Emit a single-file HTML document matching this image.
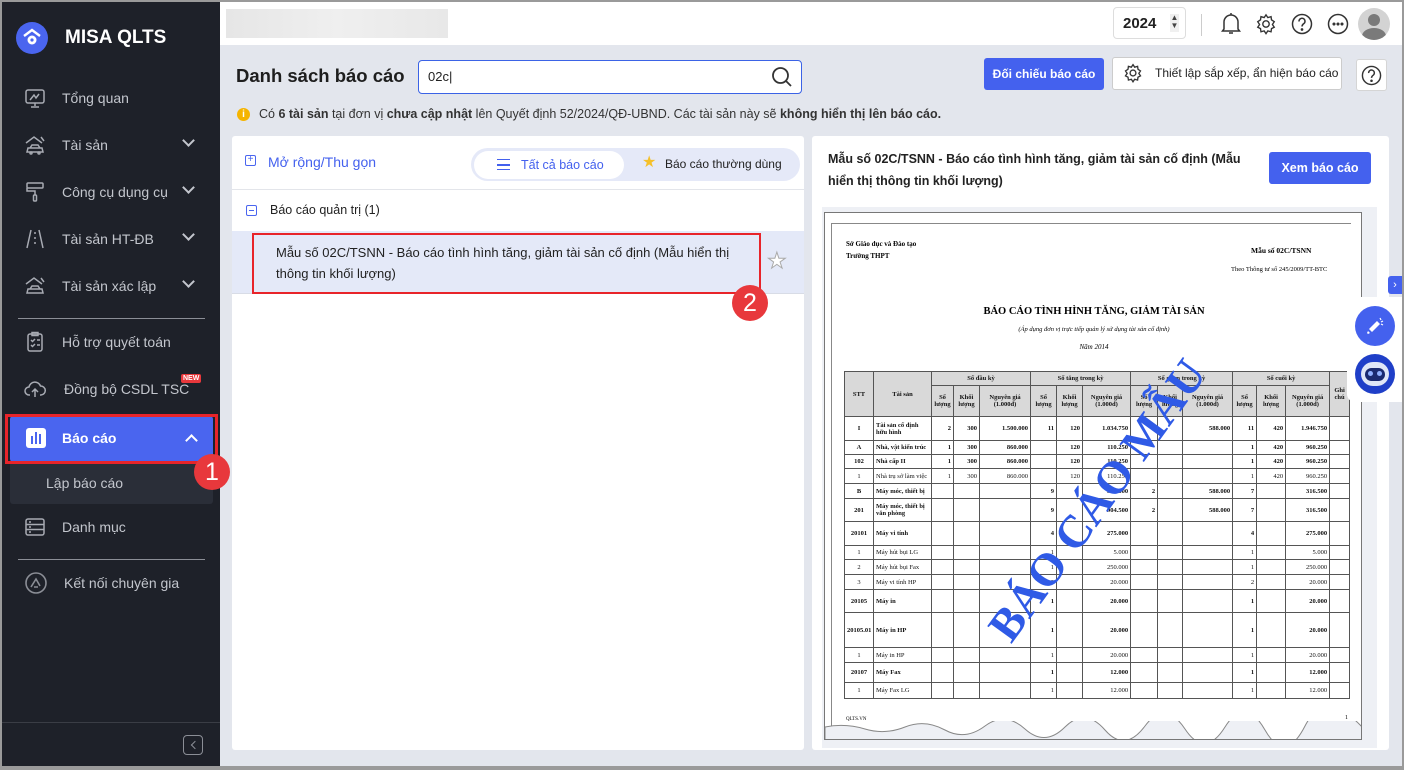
<!DOCTYPE html>
<html><head><meta charset="utf-8"><style>
*{box-sizing:border-box;margin:0;padding:0}
body{width:1404px;height:770px;overflow:hidden;font-family:"Liberation Sans",sans-serif;background:#9a9a9a;position:relative}
.frame{position:absolute;left:2px;top:2px;width:1400px;height:764px;background:#e3e6ed;overflow:hidden}
.side{position:absolute;left:0;top:0;width:218px;height:764px;background:#1e2129;color:#c9ccd3}
.a{position:absolute}
.mi{position:absolute;left:0;width:218px;height:46px;display:flex;align-items:center;font-size:14px;color:#c3c6cd}
.mi svg{position:absolute;left:22px}
.mi span{position:absolute;left:60px}
.mi .chev{position:absolute;left:182px;width:9px;height:9px;border-right:2px solid #c3c6cd;border-bottom:2px solid #c3c6cd;transform:rotate(45deg);top:14px}
.hr{position:absolute;left:16px;width:187px;height:1px;background:#8b8e96}
.top{position:absolute;left:218px;top:0;right:0;height:43px;background:#fff}
.badge{position:absolute;width:36px;height:36px;border-radius:50%;background:#e8383c;color:#fff;font-size:25px;text-align:center;line-height:36px}
.pv td{border:1px solid #555;font-family:"Liberation Serif",serif;font-size:6.5px;color:#111;text-align:right;padding:0 2px;line-height:7px;overflow:hidden;white-space:nowrap}
.pv td.l{text-align:left}.pv td.c{text-align:center}.pv tr.b td{font-weight:bold}
.pv table{border-collapse:collapse;table-layout:fixed;width:505px}
</style></head><body><div class="frame">
<div class="side">
 <div class="a" style="left:14px;top:20px;width:32px;height:32px;border-radius:50%;background:#4a65ef"></div>
 <svg class="a" style="left:19px;top:24px" width="22" height="22" viewBox="0 0 22 22"><path d="M3 10L11 4L19 10" stroke="#fff" stroke-width="2.4" fill="none"/><circle cx="11" cy="14" r="4.5" fill="#fff"/><circle cx="11" cy="14" r="1.6" fill="#4a65ef"/></svg>
 <div class="a" style="left:63px;top:25px;font-size:19px;font-weight:bold;color:#fff">MISA QLTS</div>
 <div class="mi" style="top:73px"><svg width="22" height="22" viewBox="0 0 22 22" fill="none" stroke="#a8abb3" stroke-width="1.5"><rect x="2" y="3" width="18" height="13" rx="2"/><path d="M6 13l4-5 2 3 3-4M11 16v3M7 20h8"/></svg><span>Tổng quan</span></div>
 <div class="mi" style="top:120px"><svg width="22" height="22" viewBox="0 0 22 22" fill="none" stroke="#a8abb3" stroke-width="1.5"><path d="M2 9l8-6 8 6M17 3l3 4M4 14h14l1 4H3zM6 14l2-3h6l2 3"/><circle cx="7" cy="19" r="1"/><circle cx="15" cy="19" r="1"/></svg><span>Tài sản</span><i class="chev"></i></div>
 <div class="mi" style="top:167px"><svg width="22" height="22" viewBox="0 0 22 22" fill="none" stroke="#a8abb3" stroke-width="1.5"><rect x="3" y="2" width="16" height="5" rx="1"/><path d="M3 7v3h8v4"/><rect x="9.5" y="14" width="3" height="6" rx="1"/></svg><span>Công cụ dụng cụ</span><i class="chev"></i></div>
 <div class="mi" style="top:214px"><svg width="22" height="22" viewBox="0 0 22 22" fill="none" stroke="#a8abb3" stroke-width="1.5"><path d="M7 2L3 20M15 2l4 18M11 4v2M11 9v2M11 14v2"/></svg><span>Tài sản HT-ĐB</span><i class="chev"></i></div>
 <div class="mi" style="top:261px"><svg width="22" height="22" viewBox="0 0 22 22" fill="none" stroke="#a8abb3" stroke-width="1.5"><path d="M2 9l8-6 8 6M17 3l3 4M4 14h14l1 4H3zM6 14l2-3h6l2 3"/></svg><span>Tài sản xác lập</span><i class="chev"></i></div>
 <div class="hr" style="top:316px"></div>
 <div class="mi" style="top:317px"><svg width="22" height="22" viewBox="0 0 22 22" fill="none" stroke="#a8abb3" stroke-width="1.5"><rect x="4" y="3" width="14" height="17" rx="2"/><rect x="8" y="1.5" width="6" height="3"/><path d="M7 9l1.5 1.5L11 8M7 14l1.5 1.5L11 13M13 9h3M13 14h3"/></svg><span>Hỗ trợ quyết toán</span></div>
 <div class="mi" style="top:364px"><svg width="22" height="22" viewBox="0 0 22 22" fill="none" stroke="#a8abb3" stroke-width="1.5"><path d="M6 17H5a4 4 0 010-8 6 6 0 0111.5-1A4.5 4.5 0 0117 17h-1M11 19v-8M8 14l3-3 3 3"/></svg><span style="left:62px">Đồng bộ CSDL TSC</span><b class="a" style="left:179px;top:8px;background:#e8383c;color:#fff;font-size:7px;padding:1px 2px;border-radius:2px">NEW</b></div>
 <div class="a" style="left:8px;top:414px;width:203px;height:46px;background:#4a65ef;border-radius:3px"></div>
 <div class="a" style="left:3px;top:412px;width:213px;height:50px;border:3px solid #e8242a"></div>
 <div class="a" style="left:24px;top:426px;width:20px;height:20px;background:#fff;border-radius:3px"></div>
 <div class="a" style="left:29px;top:434px;width:2px;height:8px;background:#4a65ef"></div><div class="a" style="left:33px;top:430px;width:2px;height:12px;background:#4a65ef"></div><div class="a" style="left:37px;top:432px;width:2px;height:10px;background:#4a65ef"></div>
 <div class="a" style="left:60px;top:428px;font-size:14px;font-weight:bold;color:#fff">Báo cáo</div>
 <div class="a" style="left:185px;top:434px;width:9px;height:9px;border-left:2px solid #fff;border-top:2px solid #fff;transform:rotate(45deg)"></div>
 <div class="a" style="left:8px;top:462px;width:203px;height:40px;background:#2a2e38;border-radius:0 0 3px 3px"></div>
 <div class="a" style="left:44px;top:473px;font-size:14px;color:#c3c6cd">Lập báo cáo</div>
 <div class="mi" style="top:502px"><svg width="22" height="22" viewBox="0 0 22 22" fill="none" stroke="#a8abb3" stroke-width="1.5"><rect x="2" y="3" width="18" height="16" rx="2"/><path d="M2 8.5h18M2 13.5h18M5 6h2M5 11h2M5 16h2"/></svg><span>Danh mục</span></div>
 <div class="hr" style="top:557px"></div>
 <div class="mi" style="top:558px"><svg width="24" height="24" viewBox="0 0 24 24" fill="none" stroke="#8b8e96" stroke-width="1.6"><circle cx="12" cy="12" r="10"/><path d="M7 16l5-8 4 7M10 16h4"/></svg><span style="left:62px">Kết nối chuyên gia</span></div>
 <div class="a" style="left:0;top:720px;width:218px;height:1px;background:#3a3d45"></div>
 <div class="a" style="left:181px;top:733px;width:20px;height:20px;border:1.5px solid #8b8e96;border-radius:4px"></div>
 <div class="a" style="left:190px;top:740px;width:6px;height:6px;border-left:1.5px solid #8b8e96;border-bottom:1.5px solid #8b8e96;transform:rotate(45deg)"></div>
</div>
<div class="badge" style="left:192px;top:452px">1</div>
<div class="top">
 <div class="a" style="left:6px;top:7px;width:222px;height:29px;background:linear-gradient(90deg,#e6e6e6,#efefef,#e8e8e8)"></div>
 <div class="a" style="left:893px;top:5px;width:73px;height:32px;border:1px solid #ddd;border-radius:4px;font-size:15px;font-weight:bold;color:#222;padding:7px 0 0 9px">2024</div>
 <div class="a" style="left:950px;top:12px;width:9px;height:18px;background:#f0f0f0;font-size:8px;color:#444;text-align:center;line-height:8px">▲<br>▼</div>
 <div class="a" style="left:981px;top:12px;width:1px;height:22px;background:#ccc"></div>
 <svg class="a" style="left:1000px;top:10px" width="22" height="24" viewBox="0 0 22 24" fill="none" stroke="#333" stroke-width="1.5"><path d="M4 17V10a7 7 0 0114 0v7l1.5 2h-17zM9 21h4M11 1v2"/></svg>
 <svg class="a" style="left:1035px;top:11px" width="22" height="22" viewBox="0 0 24 24" fill="none" stroke="#333" stroke-width="1.5"><circle cx="12" cy="12" r="3.5"/><path d="M12 2l2 3 3.5-1 .5 3.5 3 2-2 3 2 3-3 1.5-.5 3.5-3.5-1-2 3-2-3-3.5 1-.5-3.5-3-1.5 2-3-2-3 3-2 .5-3.5 3.5 1z"/></svg>
 <svg class="a" style="left:1071px;top:11px" width="22" height="22" viewBox="0 0 22 22" fill="none" stroke="#333" stroke-width="1.5"><circle cx="11" cy="11" r="9.5"/><path d="M8 8.5a3 3 0 115 2c-1.2.8-2 1.3-2 3"/><circle cx="11" cy="16.5" r=".6" fill="#333"/></svg>
 <svg class="a" style="left:1107px;top:11px" width="22" height="22" viewBox="0 0 22 22" fill="none" stroke="#333" stroke-width="1.5"><circle cx="11" cy="11" r="9.5"/><circle cx="7" cy="11" r=".8" fill="#333"/><circle cx="11" cy="11" r=".8" fill="#333"/><circle cx="15" cy="11" r=".8" fill="#333"/></svg>
 <div class="a" style="left:1138px;top:6px;width:32px;height:32px;border-radius:50%;background:#d3d3d3;overflow:hidden"><div class="a" style="left:10px;top:6px;width:12px;height:12px;border-radius:50%;background:#7a7a7a"></div><div class="a" style="left:4px;top:20px;width:24px;height:16px;border-radius:50%;background:#7a7a7a"></div></div>
</div>
<div class="a" style="left:234px;top:63px;font-size:18.5px;font-weight:bold;color:#1e1e1e">Danh sách báo cáo</div>
<div class="a" style="left:416px;top:58px;width:384px;height:34px;border:1.5px solid #3b63e6;border-radius:4px;background:#fff;font-size:13px;color:#222;padding:8px 0 0 9px">02c|</div>
<svg class="a" style="left:769px;top:64px" width="22" height="22" viewBox="0 0 22 22" fill="none" stroke="#333" stroke-width="1.8"><circle cx="9.5" cy="9.5" r="7.5"/><path d="M15 15l5 5"/></svg>
<div class="a" style="left:982px;top:56px;width:120px;height:32px;background:#4461ee;border-radius:3px;color:#fff;font-size:12px;font-weight:bold;text-align:center;line-height:32px;white-space:nowrap">Đối chiếu báo cáo</div>
<div class="a" style="left:1110px;top:55px;width:230px;height:33px;background:#fff;border:1px solid #ccc;border-radius:3px;font-size:12px;color:#222;line-height:31px;padding-left:42px;white-space:nowrap;overflow:hidden">Thiết lập sắp xếp, ẩn hiện báo cáo</div>
<svg class="a" style="left:1121px;top:61px" width="20" height="20" viewBox="0 0 24 24" fill="none" stroke="#333" stroke-width="1.6"><circle cx="12" cy="12" r="3.5"/><path d="M12 2l2 3 3.5-1 .5 3.5 3 2-2 3 2 3-3 1.5-.5 3.5-3.5-1-2 3-2-3-3.5 1-.5-3.5-3-1.5 2-3-2-3 3-2 .5-3.5 3.5 1z"/></svg>
<div class="a" style="left:1354px;top:57px;width:31px;height:32px;background:#fff;border:1px solid #d5d5d5;border-radius:3px"></div>
<svg class="a" style="left:1359px;top:63px" width="21" height="21" viewBox="0 0 22 22" fill="none" stroke="#333" stroke-width="1.5"><circle cx="11" cy="11" r="9.5"/><path d="M8 8.5a3 3 0 115 2c-1.2.8-2 1.3-2 3"/><circle cx="11" cy="16.5" r=".6" fill="#333"/></svg>
<div class="a" style="left:235px;top:106px;width:13px;height:13px;border-radius:50%;background:#f5b400;color:#fff;font-size:10px;text-align:center;line-height:13px;font-weight:bold">i</div>
<div class="a" style="left:257px;top:105px;font-size:12.5px;color:#333;white-space:nowrap">Có <b>6 tài sản</b> tại đơn vị <b>chưa cập nhật</b> lên Quyết định 52/2024/QĐ-UBND. Các tài sản này sẽ <b>không hiển thị lên báo cáo.</b></div>
<!-- left panel -->
<div class="a" style="left:230px;top:134px;width:572px;height:614px;background:#fff;border-radius:3px"></div>
<div class="a" style="left:243px;top:153px;width:11px;height:11px;border:1px solid #4a65ef;border-radius:2px;color:#4a65ef;font-size:10px;line-height:8px;text-align:center">+</div>
<div class="a" style="left:266px;top:152px;font-size:14px;color:#4461ee">Mở rộng/Thu gọn</div>
<div class="a" style="left:469px;top:146px;width:329px;height:33px;background:#e5e9f8;border-radius:17px"></div>
<div class="a" style="left:472px;top:149px;width:150px;height:28px;background:#fff;border-radius:14px;font-size:12.5px;color:#4461ee;line-height:28px;padding-left:47px">Tất cả báo cáo</div>
<div class="a" style="left:495px;top:157px;width:13px;height:11px;border-top:1.5px solid #4461ee;border-bottom:1.5px solid #4461ee"></div><div class="a" style="left:495px;top:162px;width:13px;height:1.5px;background:#4461ee"></div>
<div class="a" style="left:640px;top:150px;font-size:16px;color:#f5c02a">★</div>
<div class="a" style="left:663px;top:155px;font-size:12px;color:#222;white-space:nowrap">Báo cáo thường dùng</div>
<div class="a" style="left:230px;top:187px;width:572px;height:1px;background:#e3e5ea"></div>
<div class="a" style="left:244px;top:203px;width:11px;height:11px;border:1px solid #4a65ef;border-radius:2px"></div><div class="a" style="left:247px;top:208px;width:5px;height:1px;background:#4a65ef"></div>
<div class="a" style="left:268px;top:201px;font-size:12.5px;color:#222">Báo cáo quản trị (1)</div>
<div class="a" style="left:230px;top:229px;width:572px;height:63px;background:#e4e9f8;border-bottom:1px solid #d8dce6"></div>
<div class="a" style="left:250px;top:231px;width:509px;height:61px;border:2.5px solid #e8242a"></div>
<div class="a" style="left:274px;top:240px;width:470px;font-size:13px;color:#222;line-height:21px">Mẫu số 02C/TSNN - Báo cáo tình hình tăng, giảm tài sản cố định (Mẫu hiển thị thông tin khối lượng)</div>
<div class="a" style="left:765px;top:246px;font-size:22px;color:#fff;-webkit-text-stroke:1px #aaa">★</div>
<div class="badge" style="left:730px;top:283px">2</div>
<!-- right panel -->
<div class="a" style="left:810px;top:134px;width:577px;height:614px;background:#fff;border-radius:3px"></div>
<div class="a" style="left:826px;top:146px;width:440px;font-size:12.5px;font-weight:bold;color:#222;line-height:22px">Mẫu số 02C/TSNN - Báo cáo tình hình tăng, giảm tài sản cố định (Mẫu hiển thị thông tin khối lượng)</div>
<div class="a" style="left:1267px;top:150px;width:102px;height:32px;background:#4461ee;border-radius:3px;color:#fff;font-size:12.5px;font-weight:bold;text-align:center;line-height:32px">Xem báo cáo</div>
<div class="a" style="left:820px;top:205px;width:555px;height:541px;background:#eef0f5"></div>
<div class="a pv" style="left:822px;top:210px;width:538px;height:528px;background:#fff;border:1px solid #777;overflow:hidden">
 <div class="a" style="left:6px;top:10px;width:520px;height:512px;border-left:1px solid #888;border-top:1px solid #888"></div>
 <div class="a" style="left:21px;top:27px;font:bold 7px 'Liberation Serif',serif">Sở Giáo dục và Đào tạo<br><span style="line-height:16px">Trường THPT</span></div>
 <div class="a" style="left:426px;top:33px;font:bold 7.5px 'Liberation Serif',serif">Mẫu số 02C/TSNN</div>
 <div class="a" style="left:406px;top:53px;font:6.5px 'Liberation Serif',serif">Theo Thông tư số 245/2009/TT-BTC</div>
 <div class="a" style="left:0;width:538px;top:93px;text-align:center;font:bold 10.5px 'Liberation Serif',serif">BÁO CÁO TÌNH HÌNH TĂNG, GIẢM TÀI SẢN</div>
 <div class="a" style="left:0;width:538px;top:113px;text-align:center;font:italic 6.5px 'Liberation Serif',serif">(Áp dụng đơn vị trực tiếp quản lý sử dụng tài sản cố định)</div>
 <div class="a" style="left:0;width:538px;top:130px;text-align:center;font:italic 7px 'Liberation Serif',serif">Năm 2014</div>
 <table class="a" style="left:19px;top:158px">
 <colgroup><col style="width:29px"><col style="width:58px"><col style="width:22px"><col style="width:26px"><col style="width:51px"><col style="width:26px"><col style="width:26px"><col style="width:48px"><col style="width:27px"><col style="width:25px"><col style="width:50px"><col style="width:24px"><col style="width:29px"><col style="width:44px"><col style="width:20px"></colgroup>
 <tr class="b" style="height:14px;background:#d9d9d9"><td rowspan="2" class="c">STT</td><td rowspan="2" class="c">Tài sản</td><td colspan="3" class="c">Số đầu kỳ</td><td colspan="3" class="c">Số tăng trong kỳ</td><td colspan="3" class="c">Số giảm trong kỳ</td><td colspan="3" class="c">Số cuối kỳ</td><td rowspan="2" class="c">Ghi<br>chú</td></tr>
 <tr class="b" style="height:31px;background:#d9d9d9"><td class="c">Số<br>lượng</td><td class="c">Khối<br>lượng</td><td class="c">Nguyên giá<br>(1.000đ)</td><td class="c">Số<br>lượng</td><td class="c">Khối<br>lượng</td><td class="c">Nguyên giá<br>(1.000đ)</td><td class="c">Số<br>lượng</td><td class="c">Khối<br>lượng</td><td class="c">Nguyên giá<br>(1.000đ)</td><td class="c">Số<br>lượng</td><td class="c">Khối<br>lượng</td><td class="c">Nguyên giá<br>(1.000đ)</td></tr>
 <tr class="b" style="height:24px"><td class="c">I</td><td class="l">Tài sản cố định<br>hữu hình</td><td>2</td><td>300</td><td>1.500.000</td><td>11</td><td>120</td><td>1.034.750</td><td>2</td><td></td><td>588.000</td><td>11</td><td>420</td><td>1.946.750</td><td></td></tr>
 <tr class="b" style="height:14px"><td class="c">A</td><td class="l">Nhà, vật kiến trúc</td><td>1</td><td>300</td><td>860.000</td><td></td><td>120</td><td>110.250</td><td></td><td></td><td></td><td>1</td><td>420</td><td>960.250</td><td></td></tr>
 <tr class="b" style="height:14px"><td class="c">102</td><td class="l">Nhà cấp II</td><td>1</td><td>300</td><td>860.000</td><td></td><td>120</td><td>110.250</td><td></td><td></td><td></td><td>1</td><td>420</td><td>960.250</td><td></td></tr>
 <tr style="height:15px"><td class="c">1</td><td class="l">Nhà trụ sở làm việc</td><td>1</td><td>300</td><td>860.000</td><td></td><td>120</td><td>110.250</td><td></td><td></td><td></td><td>1</td><td>420</td><td>960.250</td><td></td></tr>
 <tr class="b" style="height:15px"><td class="c">B</td><td class="l">Máy móc, thiết bị</td><td></td><td></td><td></td><td>9</td><td></td><td>904.500</td><td>2</td><td></td><td>588.000</td><td>7</td><td></td><td>316.500</td><td></td></tr>
 <tr class="b" style="height:23px"><td class="c">201</td><td class="l">Máy móc, thiết bị<br>văn phòng</td><td></td><td></td><td></td><td>9</td><td></td><td>904.500</td><td>2</td><td></td><td>588.000</td><td>7</td><td></td><td>316.500</td><td></td></tr>
 <tr class="b" style="height:24px"><td class="c">20101</td><td class="l">Máy vi tính</td><td></td><td></td><td></td><td>4</td><td></td><td>275.000</td><td></td><td></td><td></td><td>4</td><td></td><td>275.000</td><td></td></tr>
 <tr style="height:14px"><td class="c">1</td><td class="l">Máy hút bụi LG</td><td></td><td></td><td></td><td>1</td><td></td><td>5.000</td><td></td><td></td><td></td><td>1</td><td></td><td>5.000</td><td></td></tr>
 <tr style="height:15px"><td class="c">2</td><td class="l">Máy hút bụi Fax</td><td></td><td></td><td></td><td>1</td><td></td><td>250.000</td><td></td><td></td><td></td><td>1</td><td></td><td>250.000</td><td></td></tr>
 <tr style="height:15px"><td class="c">3</td><td class="l">Máy vi tính HP</td><td></td><td></td><td></td><td>2</td><td></td><td>20.000</td><td></td><td></td><td></td><td>2</td><td></td><td>20.000</td><td></td></tr>
 <tr class="b" style="height:23px"><td class="c">20105</td><td class="l">Máy in</td><td></td><td></td><td></td><td>1</td><td></td><td>20.000</td><td></td><td></td><td></td><td>1</td><td></td><td>20.000</td><td></td></tr>
 <tr class="b" style="height:35px"><td class="c">20105.01</td><td class="l">Máy in HP</td><td></td><td></td><td></td><td>1</td><td></td><td>20.000</td><td></td><td></td><td></td><td>1</td><td></td><td>20.000</td><td></td></tr>
 <tr style="height:15px"><td class="c">1</td><td class="l">Máy in HP</td><td></td><td></td><td></td><td>1</td><td></td><td>20.000</td><td></td><td></td><td></td><td>1</td><td></td><td>20.000</td><td></td></tr>
 <tr class="b" style="height:20px"><td class="c">20107</td><td class="l">Máy Fax</td><td></td><td></td><td></td><td>1</td><td></td><td>12.000</td><td></td><td></td><td></td><td>1</td><td></td><td>12.000</td><td></td></tr>
 <tr style="height:16px"><td class="c">1</td><td class="l">Máy Fax LG</td><td></td><td></td><td></td><td>1</td><td></td><td>12.000</td><td></td><td></td><td></td><td>1</td><td></td><td>12.000</td><td></td></tr>
 </table>
 <div class="a" style="left:21px;top:504px;font:5px 'Liberation Serif',serif">QLTS.VN</div>
 <div class="a" style="left:520px;top:502px;font:6px 'Liberation Serif',serif">1</div>
 <div class="a" style="left:272px;top:287px;transform:translate(-50%,-50%) rotate(-54deg);font:bold 46px 'Liberation Serif',serif;color:#2f5ae6;white-space:nowrap">BÁO CÁO MẪU</div>
 <svg class="a" style="left:0;top:508px" width="538" height="22"><path d="M0 6 Q20 2 40 8 T80 6 T120 9 T160 5 T200 8 T240 6 T280 9 T320 5 T360 8 T400 6 T440 9 T480 5 T538 7 V22 H0Z" fill="#eef0f5" stroke="#888" stroke-width="1"/></svg>
</div>
<!-- floating -->
<div class="a" style="left:1386px;top:274px;width:14px;height:18px;background:#4461ee;border-radius:3px 0 0 3px;color:#fff;font-size:11px;line-height:18px;text-align:center">›</div>
<div class="a" style="left:1345px;top:295px;width:55px;height:105px;background:#fff;border-radius:8px 0 0 8px"></div>
<div class="a" style="left:1353px;top:304px;width:40px;height:40px;border-radius:50%;background:#4461ee"></div>
<svg class="a" style="left:1362px;top:313px" width="22" height="22" viewBox="0 0 22 22" fill="#fff"><path d="M5 14l8-8 3 3-8 8zM4 16l2 2-2 1-1-1z"/><path d="M16 3l1 2M19 6l-2 1M19 10l-2-1" stroke="#fff" stroke-width="1.2"/></svg>
<div class="a" style="left:1353px;top:352px;width:40px;height:40px;border-radius:50%;background:#1f3fc8"></div>
<div class="a" style="left:1359px;top:360px;width:28px;height:24px;border-radius:12px;background:#dfe6f7"></div>
<div class="a" style="left:1363px;top:366px;width:20px;height:13px;border-radius:7px;background:#1a2a70"></div>
<div class="a" style="left:1366px;top:369px;width:5px;height:5px;border-radius:50%;background:#8fb0ff"></div><div class="a" style="left:1375px;top:369px;width:5px;height:5px;border-radius:50%;background:#8fb0ff"></div>
</div></body></html>
